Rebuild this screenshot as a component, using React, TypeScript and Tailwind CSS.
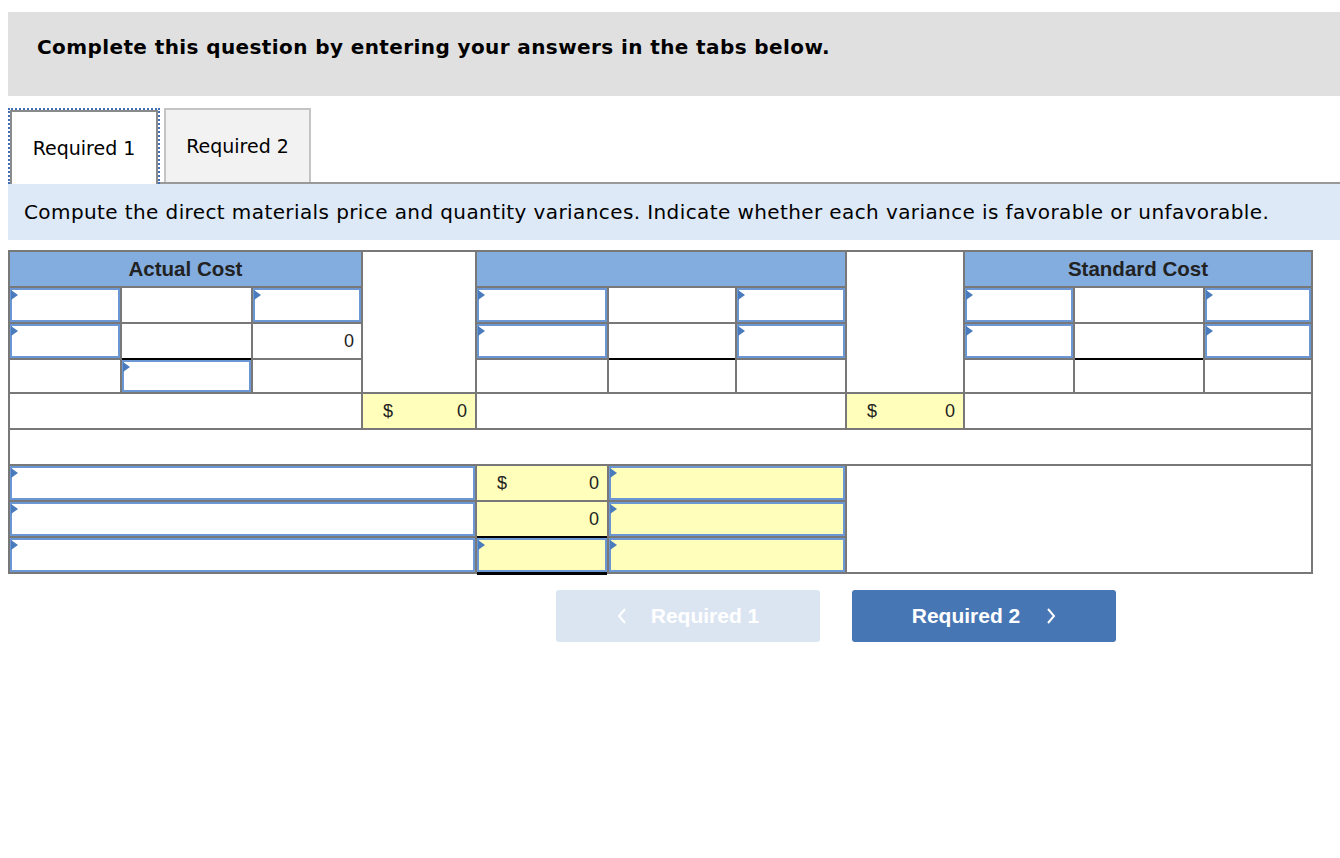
import React from "react";

function Field({ className = "bg-white" }: { className?: string }) {
  return (
    <div className={`relative ${className}`}>
      <input className="block w-full h-full border-2 border-[#6b97d4] bg-transparent outline-none" />
      <span className="absolute left-[1px] top-[2px] w-0 h-0 border-y-[5px] border-y-transparent border-l-[7px] border-l-[#4a7bbd]" />
    </div>
  );
}

function Money({ dollar, value, className = "" }: { dollar?: boolean; value: string; className?: string }) {
  return (
    <div className={`bg-[#ffffbb] flex items-center justify-between pl-[20px] pr-[8px] text-[18px] text-[#222] ${className}`}>
      <span>{dollar ? "$" : ""}</span>
      <span>{value}</span>
    </div>
  );
}

function Blank({ className = "" }: { className?: string }) {
  return <div className={`bg-white ${className}`} />;
}

function Chevron({ dir }: { dir: "left" | "right" }) {
  return (
    <svg width="10" height="16" viewBox="0 0 10 16" fill="none" stroke="white" strokeWidth="2">
      <polyline points={dir === "left" ? "8,1 2,8 8,15" : "2,1 8,8 2,15"} />
    </svg>
  );
}

export default function App() {
  return (
    <div className="w-[1340px] pt-[12px] pl-[8px] font-['DejaVu_Sans','Verdana',sans-serif] text-black">
      <div className="h-[84px] bg-[#e0e0e0] pl-[29px] pt-[23px] text-[20px] font-bold leading-[24px] tracking-[0.4px]">
        Complete this question by entering your answers in the tabs below.
      </div>

      <div className="mt-[12px] flex h-[76px] text-[19px]">
        <div className="w-[152px] border-2 border-b-0 border-dotted border-[#4070b8] flex">
          <div className="flex-1 border-2 border-b-0 border-[#8a8a8a] bg-white flex items-center justify-center">
            Required 1
          </div>
        </div>
        <div className="flex-1 flex border-b-2 border-[#999] pl-[4px]">
          <div className="w-[147px] border-2 border-b-0 border-[#c4c4c4] bg-[#f2f2f2] flex items-center justify-center">
            Required 2
          </div>
        </div>
      </div>

      <div className="h-[56px] bg-[#dde9f7] pl-[16px] flex items-center text-[20px] tracking-[0.4px]">
        Compute the direct materials price and quantity variances. Indicate whether each variance is favorable or unfavorable.
      </div>

      <div className="mt-[10px] w-[1305px] grid grid-cols-[110px_129px_108px_112px_130px_126px_108px_116px_108px_128px_106px] grid-rows-[34px_34px_34px_32px_34px_34px_34px_34px_34px] gap-[2px] p-[2px] bg-[#787878] font-['Liberation_Sans','Arial',sans-serif] text-[#222]">
        {/* header */}
        <div className="col-span-3 bg-[#83acdf] flex items-center justify-center text-[20.5px] font-bold">Actual Cost</div>
        <Blank className="row-span-4" />
        <div className="col-span-3 bg-[#83acdf]" />
        <Blank className="row-span-4" />
        <div className="col-span-3 bg-[#83acdf] flex items-center justify-center text-[20.5px] font-bold">Standard Cost</div>

        {/* row 1 */}
        <Field />
        <Blank />
        <Field />
        <Field />
        <Blank />
        <Field />
        <Field />
        <Blank />
        <Field />

        {/* row 2 */}
        <Field />
        <Blank className="shadow-[0_2px_0_#000]" />
        <div className="bg-white flex items-center justify-end pr-[7px] text-[18px]">0</div>
        <Field />
        <Blank className="shadow-[0_2px_0_#000]" />
        <Field />
        <Field />
        <Blank className="shadow-[0_2px_0_#000]" />
        <Field />

        {/* row 3 */}
        <Blank />
        <Field />
        <Blank />
        <Blank />
        <Blank />
        <Blank />
        <Blank />
        <Blank />
        <Blank />

        {/* totals */}
        <Blank className="col-span-3" />
        <Money dollar value="0" />
        <Blank className="col-span-3" />
        <Money dollar value="0" />
        <Blank className="col-span-3" />

        <Blank className="col-span-11" />

        {/* variances */}
        <Field className="col-span-4 bg-white" />
        <Money dollar value="0" />
        <Field className="col-span-2 bg-[#ffffbb]" />
        <Blank className="col-span-4 row-span-3" />

        <Field className="col-span-4 bg-white" />
        <Money value="0" className="shadow-[0_2px_0_#000]" />
        <Field className="col-span-2 bg-[#ffffbb]" />

        <Field className="col-span-4 bg-white" />
        <Field className="bg-[#ffffbb] shadow-[0_3px_0_#000]" />
        <Field className="col-span-2 bg-[#ffffbb]" />
      </div>

      <div className="mt-[16px] ml-[548px] flex gap-[32px] font-['Liberation_Sans','Arial',sans-serif] text-[21px] font-bold text-white">
        <button className="w-[264px] h-[52px] rounded-[3px] bg-[#dbe5f1] flex items-center justify-center gap-[24px]">
          <Chevron dir="left" />
          <span>Required 1</span>
        </button>
        <button className="w-[264px] h-[52px] rounded-[3px] bg-[#4776b4] flex items-center justify-center gap-[26px]">
          <span>Required 2</span>
          <Chevron dir="right" />
        </button>
      </div>
    </div>
  );
}
